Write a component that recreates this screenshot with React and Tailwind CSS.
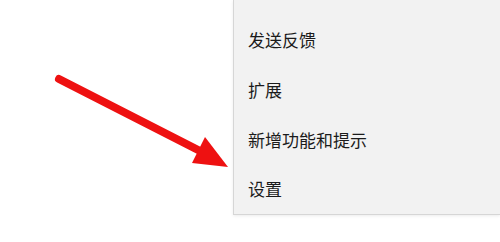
import React from "react";

const items = ["发送反馈", "扩展", "新增功能和提示", "设置"];

export default function App() {
  return (
    <div
      className="flex h-[242px] w-[500px] bg-white"
      style={{ fontFamily: '"Noto Sans CJK SC", sans-serif' }}
    >
      {/* arrow */}
      <div className="w-[233px] shrink-0">
        <svg width="233" height="242" viewBox="0 0 233 242">
          <line
            x1="59"
            y1="79"
            x2="204"
            y2="153"
            stroke="#ee1111"
            strokeWidth="8"
            strokeLinecap="round"
          />
          <polygon points="205,137 192,163 228,167" fill="#ee1111" />
        </svg>
      </div>

      {/* menu */}
      <div className="flex h-[215px] flex-1 flex-col border-b border-l border-[#d6d6d6] bg-[#f2f2f2] pt-[15px] shadow-[0_1px_3px_rgba(0,0,0,0.08)]">
        {items.map((item) => (
          <div
            key={item}
            className="flex h-[50px] items-center pl-[14px] text-[17px] text-[#1b1b1b]"
          >
            {item}
          </div>
        ))}
      </div>
    </div>
  );
}
